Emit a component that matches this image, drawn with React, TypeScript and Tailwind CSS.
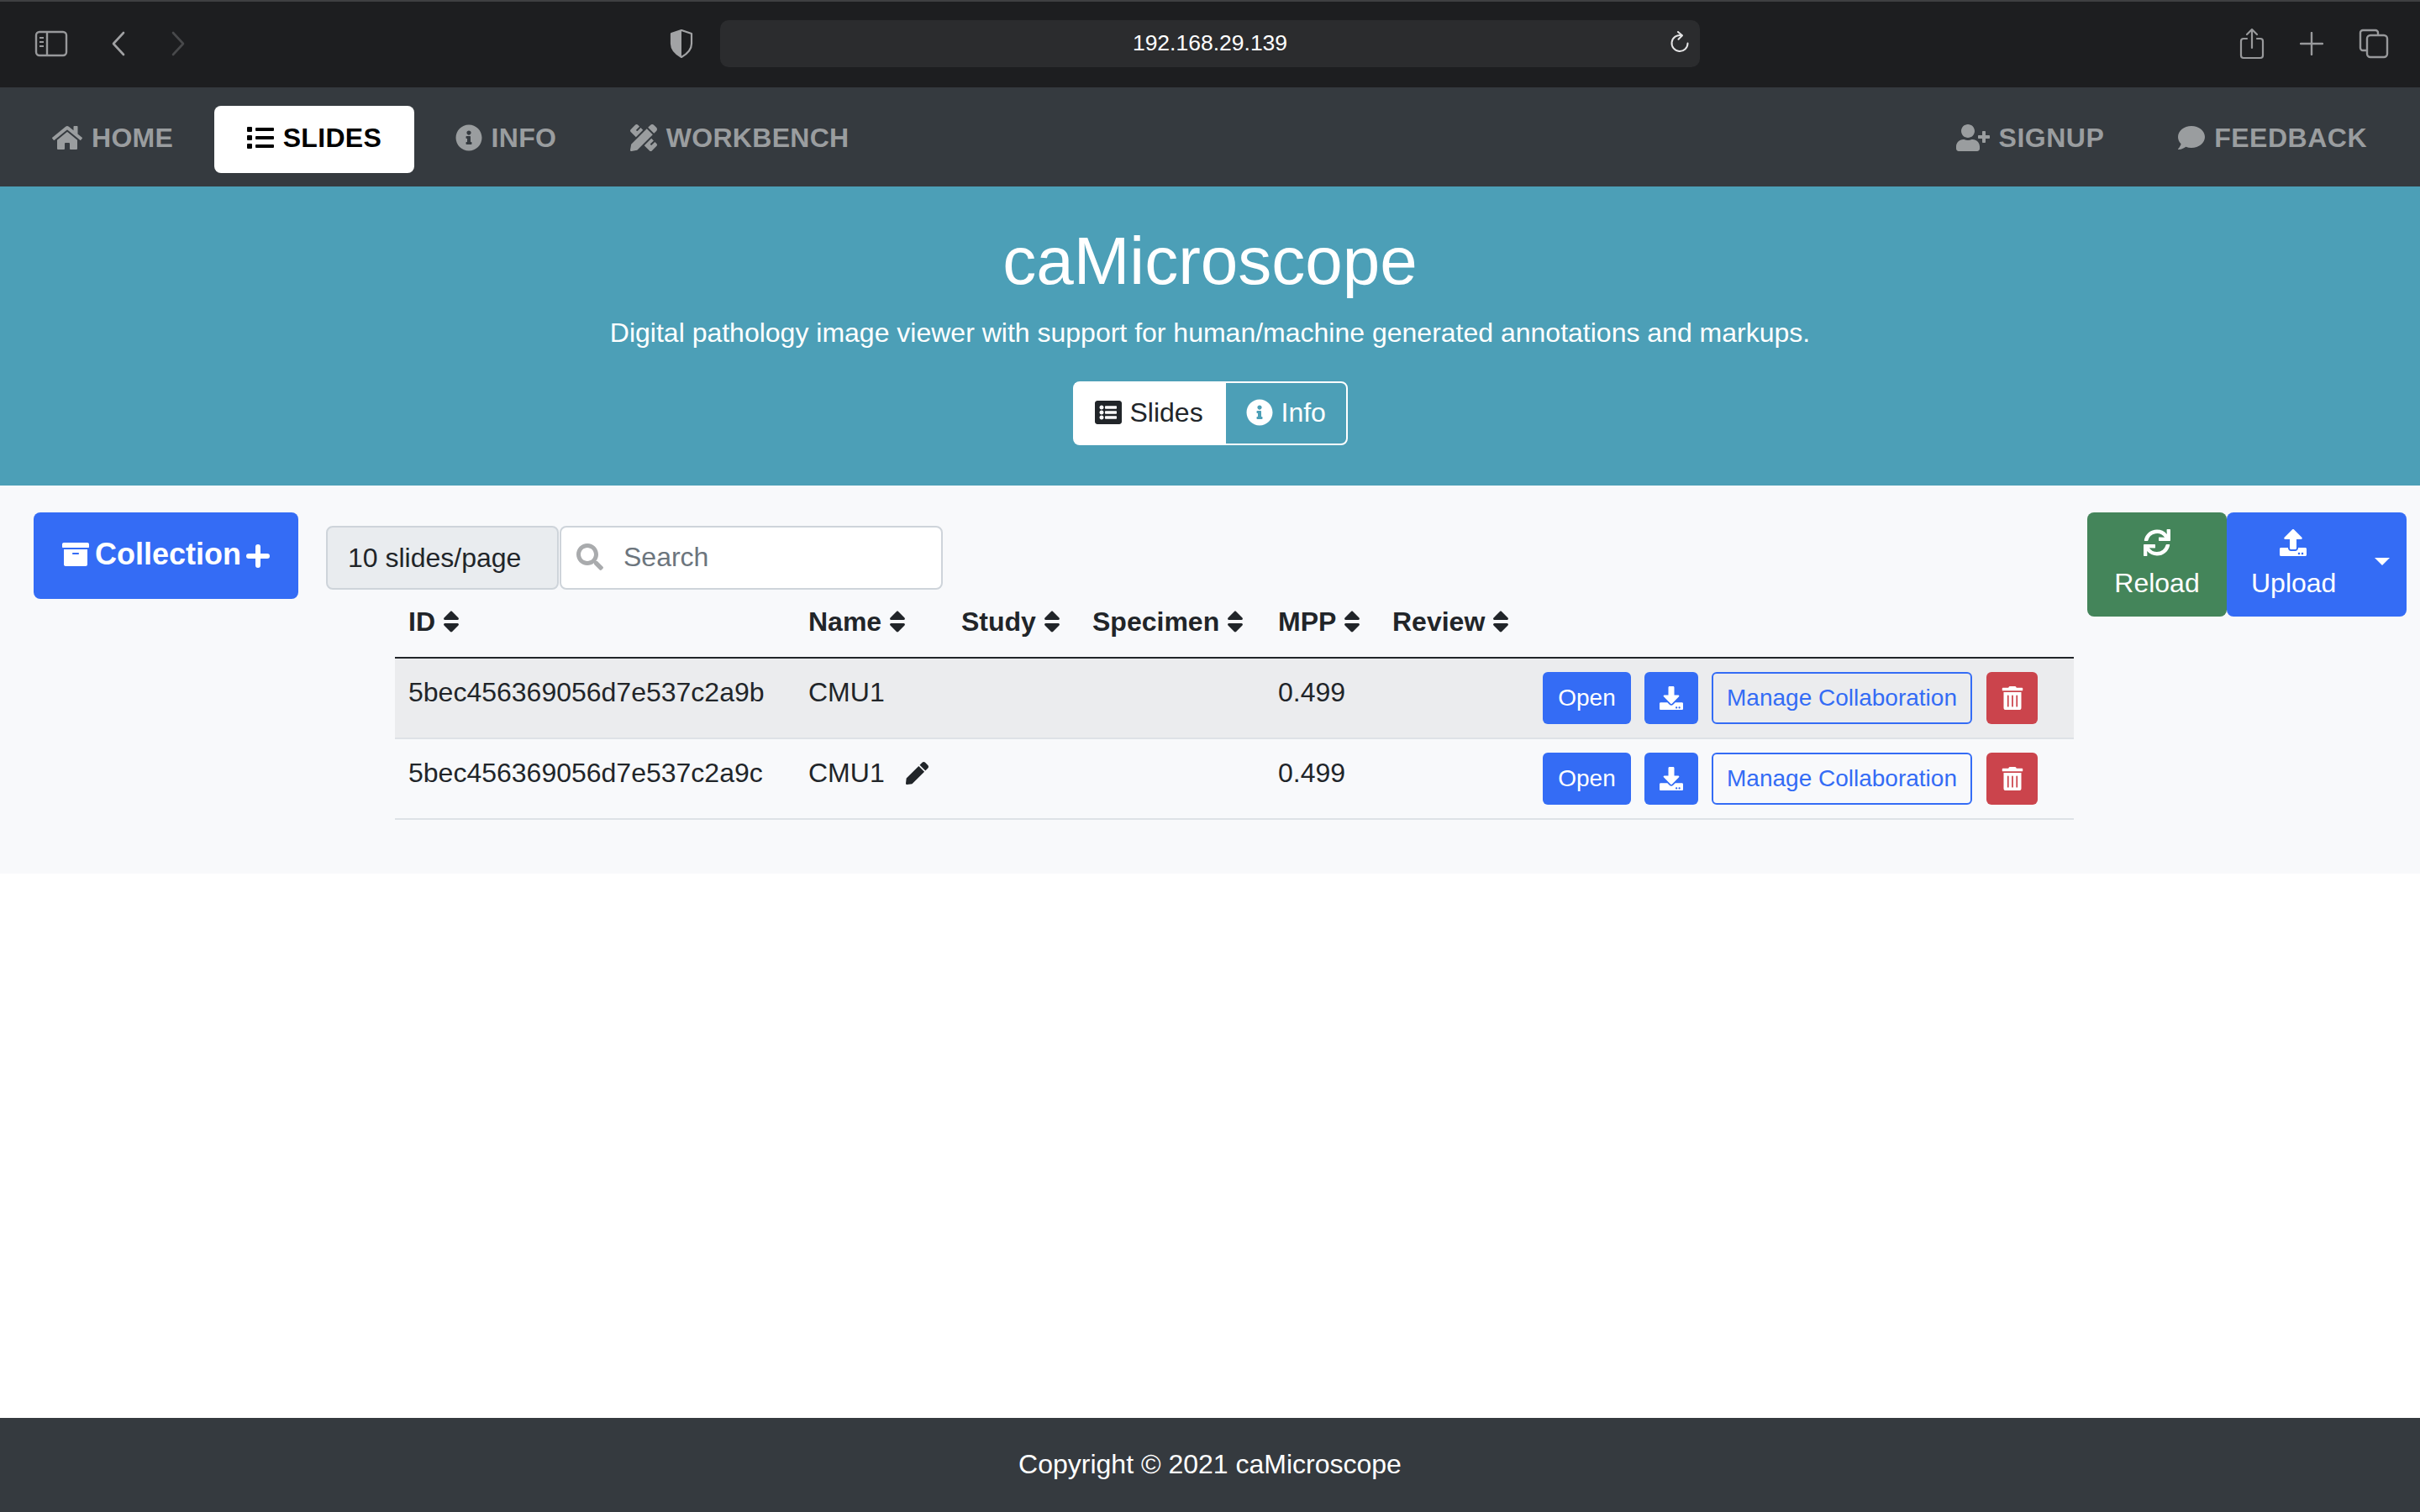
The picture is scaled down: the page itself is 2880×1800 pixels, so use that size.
import React from "react";
import {
  FaHome, FaList, FaInfoCircle, FaPencilRuler, FaUserPlus, FaComment, FaListAlt, FaArchive,
  FaSearch, FaSort, FaPen, FaDownload, FaTrashAlt, FaSync, FaUpload,
} from "react-icons/fa";

function Toolbar() {
  return (
    <div className="flex h-[104px] items-center border-t-2 border-[#3f4042] bg-[#1d1e20] pb-[2px]">
      <svg width="40" height="32" viewBox="0 0 40 32" fill="none" stroke="#98999b" strokeWidth="2.4" className="ml-[41px]">
        <rect x="2" y="2" width="36" height="28" rx="4" />
        <path d="M15 2v28" />
        <path d="M6 9h5M6 14h5M6 19h5" strokeWidth="2" />
      </svg>
      <svg width="18" height="30" viewBox="0 0 18 30" fill="none" stroke="#a0a1a3" strokeWidth="2.6" strokeLinecap="round" strokeLinejoin="round" className="ml-[51px]">
        <path d="M15 2 3 15l12 13" />
      </svg>
      <svg width="18" height="30" viewBox="0 0 18 30" fill="none" stroke="#48494b" strokeWidth="2.6" strokeLinecap="round" strokeLinejoin="round" className="ml-[53px]">
        <path d="M3 2l12 13L3 28" />
      </svg>
      <svg width="28" height="34" viewBox="0 0 28 34" className="ml-[576px]">
        <path d="M14 1 2 5v12c0 7 5 12 12 16 7-4 12-9 12-16V5z" fill="none" stroke="#a2a3a5" strokeWidth="2.2" strokeLinejoin="round" />
        <path d="M14 1 2 5v12c0 7 5 12 12 16z" fill="#a2a3a5" />
      </svg>
      <div className="relative ml-[32px] flex h-[56px] w-[1166px] items-center justify-center rounded-[10px] bg-[#2b2c2e] text-[26.5px] text-white">
        192.168.29.139
        <svg width="24" height="28" viewBox="0 0 24 28" fill="none" stroke="#e4e4e5" strokeWidth="2" strokeLinecap="round" strokeLinejoin="round" className="absolute left-[130px] ml-[1000px] top-[13px]">
          <path d="M14 5.2a9.5 9.5 0 1 0 7.5 9.3" />
          <path d="M10 1l5 4.2-4.5 4.6" />
        </svg>
      </div>
      <svg width="30" height="38" viewBox="0 0 30 38" fill="none" stroke="#98999b" strokeWidth="2.2" strokeLinecap="round" strokeLinejoin="round" className="ml-[642px]">
        <path d="M9 13H5a3 3 0 0 0-3 3v17a3 3 0 0 0 3 3h20a3 3 0 0 0 3-3V16a3 3 0 0 0-3-3h-4" />
        <path d="M15 24V2M9 8l6-6 6 6" />
      </svg>
      <svg width="28" height="28" viewBox="0 0 28 28" fill="none" stroke="#98999b" strokeWidth="2.4" strokeLinecap="round" className="ml-[42px]">
        <path d="M14 1v26M1 14h26" />
      </svg>
      <svg width="36" height="36" viewBox="0 0 36 36" fill="none" stroke="#98999b" strokeWidth="2.4" strokeLinejoin="round" className="ml-[42px]">
        <path d="M9 26H5a3 3 0 0 1-3-3V5a3 3 0 0 1 3-3h15a3 3 0 0 1 3 3v3" />
        <rect x="10" y="8" width="24" height="26" rx="4" />
      </svg>
    </div>
  );
}

function NavLink({ icon, label, active = false, wide = false }: { icon: React.ReactNode; label: string; active?: boolean; wide?: boolean }) {
  return (
    <a className={"flex h-[80px] items-center gap-[11px] rounded-[8px] px-[39px] pb-[4px] text-[32px] font-bold " + (wide ? "tracking-[0.5px] " : "tracking-[0.3px] ") + (active ? "bg-white text-black" : "text-[#9a9d9f]")}>
      {icon}
      <span>{label}</span>
    </a>
  );
}

function Navbar() {
  return (
    <nav className="flex h-[118px] items-center justify-between bg-[#353a3f] pl-[23px] pr-[24px] pt-[6px]">
      <div className="flex items-center gap-[9.5px]">
        <NavLink icon={<FaHome size={36} />} label="HOME" />
        <NavLink icon={<FaList size={32} />} label="SLIDES" active />
        <NavLink icon={<FaInfoCircle size={32} />} label="INFO" />
        <NavLink icon={<FaPencilRuler size={32} />} label="WORKBENCH" />
      </div>
      <div className="flex items-center gap-[10px]">
        <NavLink icon={<FaUserPlus size={40} />} label="SIGNUP" wide />
        <NavLink icon={<FaComment size={32} />} label="FEEDBACK" wide />
      </div>
    </nav>
  );
}

function Hero() {
  return (
    <section className="flex flex-col items-center bg-[#4c9fb7] pb-[48px] pt-[41px] text-white">
      <h1 className="text-[80px] leading-[96px] font-normal">caMicroscope</h1>
      <p className="mt-[13px] text-[32px] leading-[48px]">
        Digital pathology image viewer with support for human/machine generated annotations and markups.
      </p>
      <div className="mt-[34px] flex h-[76px] rounded-[8px] border-2 border-white">
        <a className="flex w-[180px] items-center gap-[10px] bg-white pb-[2px] pl-[24px] text-[32px] text-[#212529]">
          <FaListAlt size={32} />
          <span>Slides</span>
        </a>
        <a className="flex w-[143px] items-center gap-[10px] pb-[2px] pl-[24px] text-[32px] text-white">
          <FaInfoCircle size={32} />
          <span>Info</span>
        </a>
      </div>
    </section>
  );
}

function Head({ label }: { label: string }) {
  return (
    <th className="h-[82px] border-b-2 border-[#212529] pl-[16px] pr-[17px] pb-[18px] align-bottom text-left text-[32px] leading-[48px] font-bold whitespace-nowrap text-[#212529]">
      <span className="inline-flex items-center gap-[9px]">
        {label}
        <FaSort size={32} className="w-[20px]" />
      </span>
    </th>
  );
}

function Row({ id, pencil, shaded }: { id: string; pencil?: boolean; shaded?: boolean }) {
  const cell = "h-[96px] border-b-2 border-[#dee2e6] bg-clip-padding pl-[16px] pr-[17px] pt-[16px] align-top text-[32px] leading-[48px] text-[#212529] " + (shaded ? "bg-[#ebecee]" : "");
  return (
    <tr>
      <td className={cell}>{id}</td>
      <td className={cell}>
        <span className="flex items-center gap-[25px]">
          CMU1
          {pencil && <FaPen size={27} />}
        </span>
      </td>
      <td className={cell}></td>
      <td className={cell}></td>
      <td className={cell}>0.499</td>
      <td className={cell}></td>
      <td className={cell}>
        <div className="flex h-[62px] text-[28px]">
          <button className="w-[105px] rounded-[6px] bg-[#346cf5] text-white">Open</button>
          <button className="ml-[16px] flex w-[64px] items-center justify-center rounded-[6px] bg-[#346cf5] text-white">
            <FaDownload size={28} />
          </button>
          <button className="ml-[16px] w-[310px] rounded-[6px] border-2 border-[#346cf5] text-[#346cf5]">Manage Collaboration</button>
          <button className="ml-[17px] flex w-[61px] items-center justify-center rounded-[6px] bg-[#cb444c] text-white">
            <FaTrashAlt size={28} />
          </button>
        </div>
      </td>
    </tr>
  );
}

function Main() {
  return (
    <main className="flex h-[462px] bg-[#f8f9fb] pt-[32px] pl-[40px] pr-[16px]">
      <button className="flex h-[103px] w-[315px] shrink-0 items-start gap-[8px] rounded-[8px] bg-[#346cf5] pl-[34px] pt-[27px] text-[36px] leading-[46px] font-bold text-white">
        <FaArchive size={32} className="mt-[7px] shrink-0" />
        <span className="-ml-[1px]">Collection</span>
        <svg width="28" height="28" viewBox="0 0 28 28" fill="none" stroke="currentColor" strokeWidth="6" strokeLinecap="round" className="-ml-[2px] mt-[11px] shrink-0">
          <path d="M14 3v22M3 14h22" />
        </svg>
      </button>
      <div className="ml-[33px] w-[2079px] shrink-0">
        <div className="mt-[16px] flex h-[76px] text-[32px] leading-[48px]">
          <div className="flex w-[277px] items-center rounded-[8px] border-2 border-[#ced4da] bg-[#e9ecef] pb-[1px] pl-[24px] text-[#212529]">10 slides/page</div>
          <div className="ml-[1px] flex w-[456px] items-center rounded-[8px] border-2 border-[#ced4da] bg-white pb-[2px] pl-[18px] text-[#6c757d]">
            <FaSearch size={32} className="text-[#a9abad]" />
            <span className="ml-[24px]">Search</span>
          </div>
        </div>
        <table className="ml-[82px] w-[1998px] table-fixed border-separate border-spacing-0">
          <colgroup>
            <col className="w-[476px]" />
            <col className="w-[182px]" />
            <col className="w-[156px]" />
            <col className="w-[221px]" />
            <col className="w-[136px]" />
            <col className="w-[179px]" />
            <col />
          </colgroup>
          <thead>
            <tr>
              <Head label="ID" />
              <Head label="Name" />
              <Head label="Study" />
              <Head label="Specimen" />
              <Head label="MPP" />
              <Head label="Review" />
              <th className="border-b-2 border-[#212529]"></th>
            </tr>
          </thead>
          <tbody>
            <Row id="5bec456369056d7e537c2a9b" shaded />
            <Row id="5bec456369056d7e537c2a9c" pencil />
          </tbody>
        </table>
      </div>
      <div className="ml-[17px] flex h-[124px] shrink-0 text-[32px] leading-[48px] text-white">
        <button className="flex w-[166px] flex-col items-center rounded-[8px] bg-[#44855a] pt-[20px]">
          <FaSync size={32} />
          <span className="mt-[8px]">Reload</span>
        </button>
        <button className="relative flex w-[214px] flex-col items-start rounded-[8px] bg-[#346cf5] pt-[20px] pl-[29px]">
          <span className="flex w-[99px] justify-center">
            <FaUpload size={32} />
          </span>
          <span className="mt-[8px]">Upload</span>
          <span className="absolute left-[176px] top-[54px] h-0 w-0 border-x-[9px] border-t-[9px] border-x-transparent border-t-white"></span>
        </button>
      </div>
    </main>
  );
}

export default function App() {
  return (
    <div className="flex h-[1800px] w-[2880px] flex-col bg-white font-['Liberation_Sans',Arial,sans-serif]">
      <Toolbar />
      <Navbar />
      <Hero />
      <Main />
      <div className="flex-1"></div>
      <footer className="flex h-[112px] items-center justify-center bg-[#353a3f] pb-[2px] text-[32px] text-white">
        Copyright © 2021 caMicroscope
      </footer>
    </div>
  );
}
